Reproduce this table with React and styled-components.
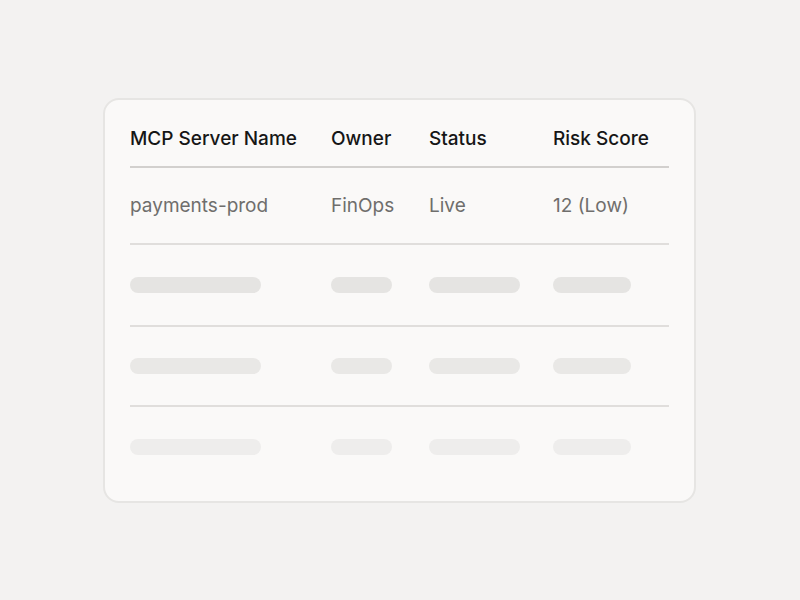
import React from "react";
import styled, { createGlobalStyle } from "styled-components";

const GlobalStyle = createGlobalStyle`
  html, body {
    margin: 0;
    padding: 0;
    background: #f3f2f1;
  }
  body {
    font-family: Inter, "Noto Sans", sans-serif;
  }
`;

const Page = styled.div`
  width: 800px;
  height: 600px;
  box-sizing: border-box;
  padding: 98px 0 0 103px;
  display: flex;
  align-items: flex-start;
`;

const Card = styled.div`
  width: 593px;
  box-sizing: border-box;
  background: #faf9f8;
  border: 2px solid #e6e5e3;
  border-radius: 16px;
  padding: 24px 25px 14px;
`;

const Grid = styled.div`
  display: grid;
  grid-template-columns: 201px 98px 124px 1fr;
`;

const HeadRow = styled.div`
  display: contents;
`;

const HeadCell = styled.div`
  font-size: 19px;
  line-height: 24px;
  font-weight: 500;
  color: #161616;
  padding: 3px 0 15px;
  border-bottom: 2px solid #d2d0ce;
  white-space: nowrap;
`;

const Cell = styled.div`
  height: ${(p) => p.$h}px;
  display: flex;
  align-items: center;
  font-size: 19px;
  color: #6f6e6c;
  border-bottom: ${(p) => (p.$last ? "none" : "2px solid #e0dedc")};
  white-space: nowrap;
`;

const Bar = styled.div`
  width: ${(p) => p.$w}px;
  height: 16px;
  border-radius: 8px;
  background: ${(p) => p.$tone};
`;

const columns = ["MCP Server Name", "Owner", "Status", "Risk Score"];
const data = ["payments-prod", "FinOps", "Live", "12 (Low)"];
const barWidths = [131, 61, 91, 78];
const skeletonRows = [
  { tone: "#e5e4e2", h: 80 },
  { tone: "#e9e8e6", h: 78 },
  { tone: "#eeedec", h: 80 },
];

export default function App() {
  return (
    <>
      <GlobalStyle />
      <Page>
        <Card>
          <Grid>
            <HeadRow>
              {columns.map((c) => (
                <HeadCell key={c}>{c}</HeadCell>
              ))}
            </HeadRow>
            {data.map((d) => (
              <Cell key={d} $h={75}>
                {d}
              </Cell>
            ))}
            {skeletonRows.map((row, i) =>
              barWidths.map((w, j) => (
                <Cell
                  key={`${i}-${j}`}
                  $h={row.h}
                  $last={i === skeletonRows.length - 1}
                >
                  <Bar $w={w} $tone={row.tone} />
                </Cell>
              ))
            )}
          </Grid>
        </Card>
      </Page>
    </>
  );
}
